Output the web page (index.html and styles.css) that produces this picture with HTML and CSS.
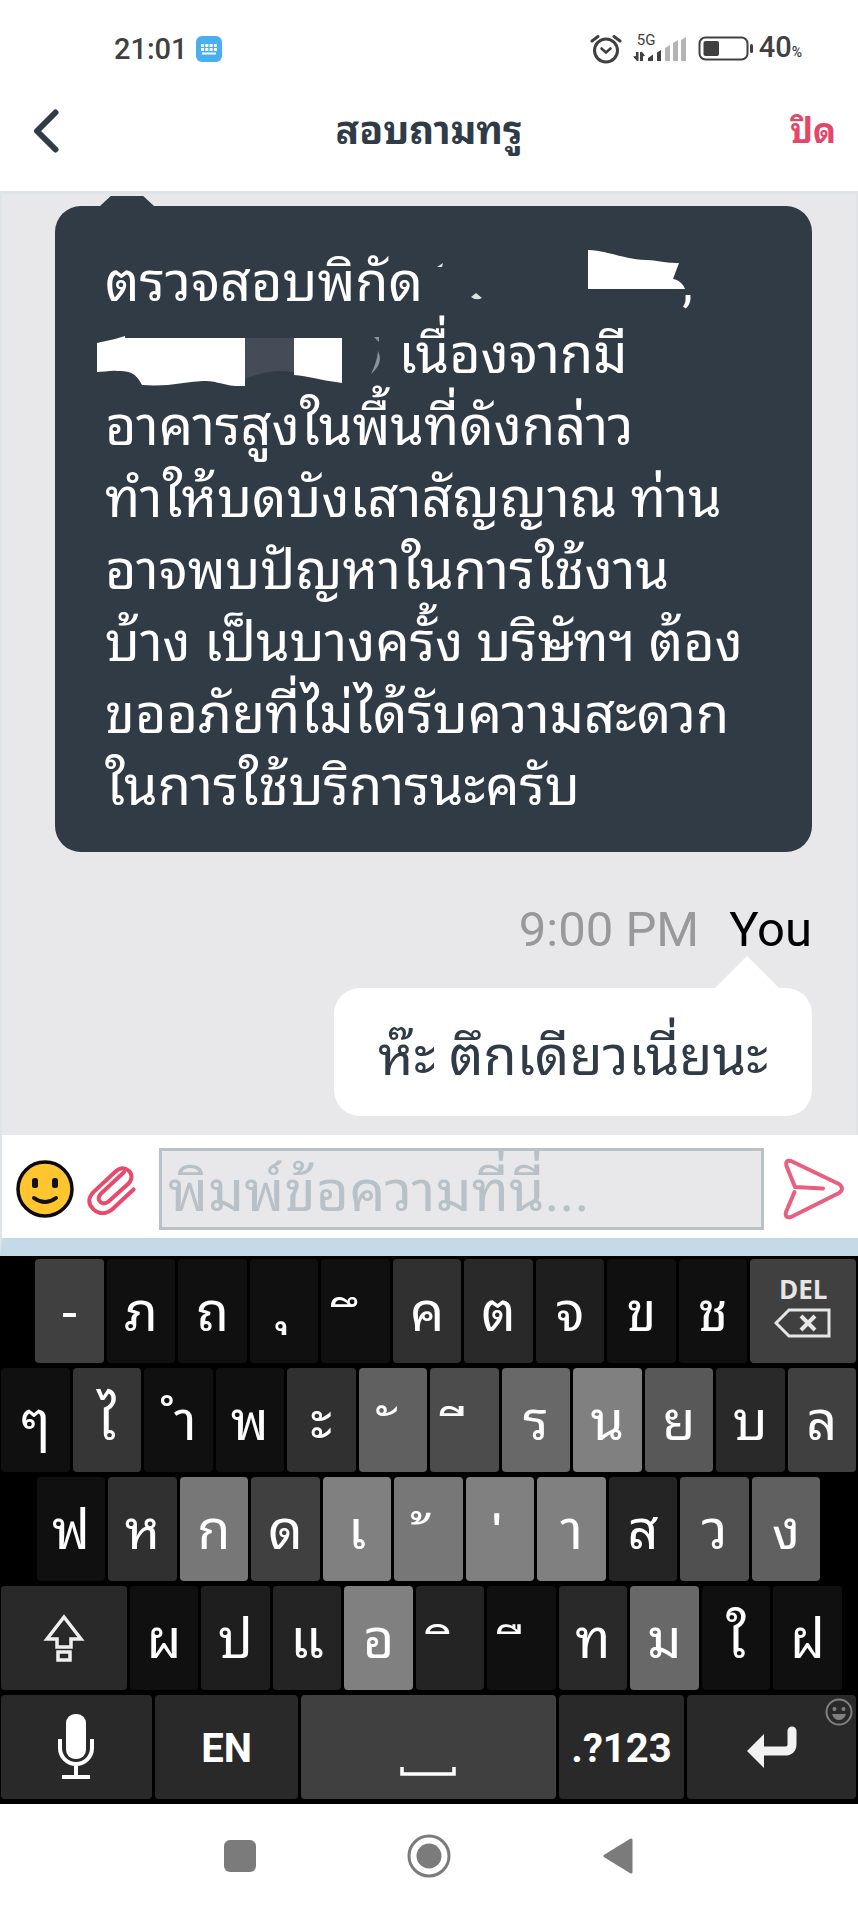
FILE: index.html
```html
<!DOCTYPE html>
<html lang="th">
<head>
<meta charset="utf-8">
<meta name="viewport" content="width=device-width, initial-scale=1">
<title>สอบถามทรู</title>
<link rel="stylesheet" href="styles.css">
</head>
<body>
<div class="status-bar">
  <div class="status-group">
    <span class="clock">21:01</span>
    <svg class="status-app" width="26" height="26" viewBox="0 0 26 26"><rect width="26" height="26" rx="6" fill="#4aaef2"/><path d="M5 9.5h16M5 13.5h16" stroke="#fff" stroke-width="3" stroke-dasharray="3 1.3"/><path d="M6 17.5h14" stroke="#fff" stroke-width="2"/></svg>
  </div>
  <div class="status-group status-right">
    <svg width="32" height="30" viewBox="0 0 32 30" fill="none" stroke="#404040" stroke-linecap="round"><circle cx="16" cy="16.500" r="11.500" stroke-width="3"/><path d="M2 7 8 2.500M30 7 24 2.500" stroke-width="3"/><path d="M11.500 14.500 16 18.500l4.500-4" stroke-width="2.600"/></svg>
    <span class="signal">
      <span class="network">5G</span>
      <svg width="54" height="26" viewBox="0 0 54 26"><path fill="#404040" d="M3 16h2.500v9H4l-4-4.500 3-.5zM7 25v-9h2l3 3.500-2 1v4.500zM15 25v-3l5-3.500v6.500zM24 25v-8.500l4-2.500v11z"/><path fill="#b4b4b4" d="M32 25V12l5-3v16zM40 25V7l5-3v21zM48 25V4l5-3v24z"/></svg>
    </span>
    <svg width="56" height="26" viewBox="0 0 56 26"><rect x="1.500" y="1.500" width="48" height="22" rx="6" fill="none" stroke="#404040" stroke-width="2"/><rect x="5.500" y="5" width="15.500" height="15" rx="2" fill="#404040"/><rect x="52" y="8" width="3" height="9" rx="1.500" fill="#404040"/></svg>
    <span class="battery">40<small>%</small></span>
  </div>
</div>

<header class="header">
  <button class="back" type="button" aria-label="Back"><svg width="26" height="44" viewBox="0 0 26 44"><path d="M22.500 3.500 4 22l18.500 18.500" fill="none" stroke="#2f3b46" stroke-width="6" stroke-linecap="round" stroke-linejoin="round"/></svg></button>
  <h1 class="title">สอบถามทรู</h1>
  <button class="close" type="button">ปิด</button>
</header>

<main class="chat">
  <div class="bubble bubble-agent">
    <p>ตรวจสอบพิกัด<svg class="blot blot-one" width="266" height="52" viewBox="0 8 266 52"><defs><filter id="soft"><feGaussianBlur stdDeviation="0.700"/></filter></defs><path d="M168 8c22 1 34 9 58 10 12 0 15 3 33 3l-6 16c7 1 11 7 12 10h-97z" fill="#fff"/><path d="M51 55q5 4 11 1l-6-5zM17 25l6-4-1 4z" fill="#dce2e6" filter="url(#soft)"/></svg>,</p>
    <p><svg class="blot blot-two" width="288" height="60" viewBox="0 0 288 60"><path d="M0 14 18 10l10-3v2h120v48c-20 1-28-6-42-5-20 1-34 6-61 4-6-12-12-14-25-14-5-1-14 1-20 1z" fill="#fff"/><path d="M148 9h49v34c-15-2-26-2-49 7z" fill="#454c57"/><path d="M197 9h48v45c-22-3-34-7-48-8z" fill="#fff"/><path d="M277 8h5v5zM281 22q6 12-7 23 6-12 7-23z" fill="#8b949b"/></svg> เนื่องจากมี</p>
    <p>อาคารสูงในพื้นที่ดังกล่าว</p>
    <p>ทำให้บดบังเสาสัญญาณ ท่าน</p>
    <p>อาจพบปัญหาในการใช้งาน</p>
    <p>บ้าง เป็นบางครั้ง บริษัทฯ ต้อง</p>
    <p>ขออภัยที่ไม่ได้รับความสะดวก</p>
    <p>ในการใช้บริการนะครับ</p>
  </div>
  <div class="meta"><time>9:00 PM</time><span class="sender">You</span></div>
  <div class="bubble bubble-user"><p>ห๊ะ ตึกเดียวเนี่ยนะ</p></div>
</main>

<form class="composer">
  <button class="icon-button" type="button" aria-label="Emoji"><svg width="58" height="58" viewBox="0 0 58 58"><circle cx="29" cy="29" r="27" fill="#ffc52f" stroke="#0b0b0b" stroke-width="3.500"/><rect x="16" y="18" width="6" height="10" rx="2.500" fill="#111"/><rect x="36" y="18" width="6" height="10" rx="2.500" fill="#111"/><path d="M18 38q11 8 22 0" fill="none" stroke="#111" stroke-width="4" stroke-linecap="round"/></svg></button>
  <button class="icon-button" type="button" aria-label="Attach file"><svg width="52" height="52" viewBox="0 0 52 52"><path d="M49.500 25.500 28 45.500c-7 6.500-15 6-20.500.5s-5.500-12 .5-18L30.500 7c5-4.500 10-4.500 14-1s4 9-.5 13.500L23.500 38c-3 2.500-6 2.500-8.500.500s-2.500-5.500.5-8.500l24-22.500" transform="translate(1 2) scale(.96)" fill="none" stroke="#e84a6c" stroke-width="4.200" stroke-linecap="round" stroke-linejoin="round"/></svg></button>
  <input class="message-input" type="text" aria-label="พิมพ์ข้อความ" placeholder="พิมพ์ข้อความที่นี่...">
  <button class="icon-button send" type="button" aria-label="Send"><svg width="62" height="62" viewBox="0 0 62 62"><path d="M40 30.500 12 29 3.500 8Q2 1.500 8 3L56 26q6 4.500 0 9L8 59Q1.500 60.500 3 54L11.500 34" fill="none" stroke="#e8607f" stroke-width="4" stroke-linecap="round" stroke-linejoin="round"/></svg></button>
</form>

<section class="keyboard" aria-label="Keyboard">
  <div class="key-row row-one">
    <span></span><button class="key g7">-</button><button class="key">ภ</button><button class="key">ถ</button><button class="key mark-low">&nbsp;ุ</button><button class="key mark">&nbsp;ึ</button><button class="key g5">ค</button><button class="key g4">ต</button><button class="key g2">จ</button><button class="key">ข</button><button class="key">ช</button>
    <button class="key g7 delete"><span>DEL</span><svg width="58" height="30" viewBox="0 0 58 30" fill="none" stroke="#e6e6e6" stroke-width="3"><path d="M2 15 15 2h40v26H15z"/><path d="m27 8 14 14M41 8 27 22" stroke-width="4"/></svg></button>
  </div>
  <div class="key-row row-two">
    <button class="key">ๆ</button><button class="key g6">ไ</button><button class="key">&nbsp;ำ</button><button class="key">พ</button><button class="key g5">ะ</button><button class="key mark g11">&nbsp;ั</button><button class="key mark g8">&nbsp;ี</button><button class="key g12">ร</button><button class="key g14">น</button><button class="key g10">ย</button><button class="key g4">บ</button><button class="key g7">ล</button>
  </div>
  <div class="key-row row-three">
    <span></span><button class="key">ฟ</button><button class="key g5">ห</button><button class="key g13">ก</button><button class="key g7">ด</button><button class="key g14">เ</button><button class="key mark g13">&nbsp;้</button><button class="key mark g14">&nbsp;่</button><button class="key g14">า</button><button class="key g3">ส</button><button class="key g9">ว</button><button class="key g11">ง</button>
  </div>
  <div class="key-row row-four">
    <button class="key g4 key-icon" aria-label="Shift"><svg width="42" height="50" viewBox="0 0 42 50" fill="none" stroke="#efefef" stroke-width="3.500"><path d="M21 4 4 26h10v8h14v-8h10zM15 39h12v8H15z"/></svg></button><button class="key">ผ</button><button class="key g2">ป</button><button class="key g3">แ</button><button class="key g14">อ</button><button class="key mark g3">&nbsp;ิ</button><button class="key mark">&nbsp;ื</button><button class="key g4">ท</button><button class="key g12">ม</button><button class="key">ใ</button><button class="key">ฝ</button>
  </div>
  <div class="key-row row-five">
    <button class="key g4 key-icon" aria-label="Voice input"><svg width="38" height="66" viewBox="0 0 38 66"><rect x="9" y="0" width="20" height="45" rx="9" fill="#fff"/><path d="M3 25v9a16 16 0 0 0 32 0v-9M19 50v13M5 63h28" fill="none" stroke="#fff" stroke-width="4"/></svg></button>
    <button class="key g4 key-label">EN</button>
    <button class="key g7 space" aria-label="Space"><svg width="56" height="10" viewBox="0 0 56 10"><path d="M2 1v7h52V1" fill="none" stroke="#fff" stroke-width="3.500"/></svg></button>
    <button class="key g4 key-label">.?123</button>
    <button class="key g4 key-icon enter" aria-label="Enter"><svg width="50" height="42" viewBox="0 0 50 42"><path d="M45 5v13q0 7-7 7H16" fill="none" stroke="#f2f2f2" stroke-width="9" stroke-linecap="round"/><path d="M0 25 17 8v34z" fill="#f2f2f2"/></svg><svg class="enter-emoji" width="28" height="28" viewBox="0 0 28 28"><circle cx="14" cy="14" r="12.500" fill="none" stroke="#808080" stroke-width="2"/><circle cx="9.500" cy="11" r="2" fill="#808080"/><circle cx="18.500" cy="11" r="2" fill="#808080"/><path d="M7 16h14q-2 6-7 6t-7-6z" fill="#808080"/></svg></button>
  </div>
</section>

<nav class="system-nav">
  <button type="button" aria-label="Recent apps"><svg width="32" height="32"><rect width="32" height="32" rx="6" fill="#7b7b7b"/></svg></button>
  <button type="button" aria-label="Home"><svg width="44" height="44" viewBox="0 0 44 44"><circle cx="22" cy="22" r="20" fill="none" stroke="#7b7b7b" stroke-width="3"/><circle cx="22" cy="22" r="12.500" fill="#7b7b7b"/></svg></button>
  <button type="button" aria-label="Back"><svg width="30" height="36" viewBox="0 0 30 36"><path d="M28 2v32L2 18z" fill="#7b7b7b" stroke="#7b7b7b" stroke-width="3" stroke-linejoin="round"/></svg></button>
</nav>
</body>
</html>
```
FILE: styles.css
```css
* { box-sizing: border-box; }

body {
  margin: 0;
  background: #fff;
  font-family: Roboto, "Noto Sans Thai Looped", "Noto Sans Thai", "Noto Sans", sans-serif;
  color: #2f3b46;
}

button {
  margin: 0;
  padding: 0;
  border: 0;
  background: none;
  color: inherit;
  font: inherit;
}

svg { display: block; flex: none; }
p { margin: 0; }

.status-bar {
  display: flex;
  align-items: center;
  justify-content: space-between;
  height: 96px;
  padding: 2px 56px 0 114px;
  color: #404040;
}
.status-group { display: flex; align-items: center; gap: 8px; }
.status-right { gap: 11px; }
.clock, .battery { font-size: 29px; line-height: 32px; font-weight: 500; }
.battery small { font-size: 14px; }
.status-right .battery { margin-left: -6px; }
.signal { position: relative; }
.network {
  position: absolute;
  top: -4px;
  left: 4px;
  font-size: 15px;
  line-height: 16px;
}

.header {
  display: grid;
  grid-template-columns: 1fr auto 1fr;
  align-items: center;
  height: 95px;
  padding: 0 22px 26px;
}
.back { justify-self: start; margin-left: 11px; }
.title { margin: 0; font-size: 39px; line-height: 48px; font-weight: 700; }
.close {
  justify-self: end;
  font-size: 34px;
  line-height: 48px;
  font-weight: 700;
  color: #e4476a;
}

.chat {
  padding: 12px 44px 19px 53px;
  border: 2px solid #dfe4e9;
  border-top-width: 3px;
  border-bottom: 0;
  background: #e8e8ea;
}
.bubble {
  position: relative;
  border-radius: 26px;
  font-size: 54px;
  line-height: 72px;
  white-space: nowrap;
}
.bubble::before { content: ""; position: absolute; }
.bubble-agent {
  padding: 41px 50px 29px;
  background: #303b46;
  color: #fff;
}
.bubble-agent::before {
  left: 45px;
  bottom: 100%;
  width: 54px;
  height: 10px;
  background: inherit;
  clip-path: polygon(20% 0, 80% 0, 100% 100%, 0 100%);
}
.bubble-user {
  width: fit-content;
  margin-left: auto;
  padding: 33px 44px 23px;
  background: #fff;
}
.bubble-user::before {
  right: 33px;
  bottom: 100%;
  width: 64px;
  height: 32px;
  background: inherit;
  clip-path: polygon(50% 0, 100% 100%, 0 100%);
}
.blot { display: inline-block; }
.blot-one { margin: 0 -4px 0 -3px; vertical-align: -1px; }
.blot-two { margin-left: -8px; vertical-align: -16px; }

.meta {
  display: flex;
  justify-content: flex-end;
  gap: 30px;
  margin: 48px 0 28px;
  font-size: 49px;
  line-height: 60px;
}
.meta time { color: #999; }
.sender { color: #000; }

.composer {
  display: flex;
  align-items: center;
  gap: 11px;
  height: 121px;
  padding: 5px 13px 0 14px;
  border-bottom: 18px solid #c4dae8;
  border-left: 2px solid #dfe4e9;
}
.message-input {
  flex: 1;
  min-width: 0;
  height: 82px;
  margin: 0 8px 0 11px;
  padding: 6px 6px 0;
  border: 3px solid #b8c1c7;
  border-radius: 0;
  background: #e8e8ea;
  color: #2f3b46;
  font: inherit;
  font-size: 57px;
  line-height: 92px;
}
.message-input::placeholder { color: #b8c1c7; opacity: 1; line-height: 92px; }

.keyboard {
  display: grid;
  gap: 5px;
  padding: 3px 0 5px;
  background: #000;
}
.key-row { display: grid; }
.row-one { grid-template-columns: 48fr repeat(10, 100fr) 152fr; }
.row-two { grid-template-columns: repeat(12, 100fr); }
.row-three { grid-template-columns: 50fr repeat(11, 100fr) 50fr; }
.row-four { grid-template-columns: 180fr repeat(10, 100fr) 20fr; }
.row-five { grid-template-columns: 215fr 205fr 360fr 180fr 240fr; }

.key {
  display: flex;
  align-items: center;
  justify-content: center;
  min-width: 0;
  height: 104px;
  margin: 0 2px 0 1px;
  padding-top: 4px;
  border-radius: 4px;
  background: #101010;
  color: #fff;
  font-size: 54px;
  line-height: 60px;
  white-space: pre;
}
.mark { padding: 26px 6px 0 0; }
.mark-low { padding-bottom: 26px; }
.key-label { font-size: 40px; font-weight: 700; }
.key-icon { padding-top: 0; }
.delete { flex-direction: column; gap: 6px; padding: 0 0 8px; color: #e6e6e6; }
.delete span {
  font-family: "Open Sans", sans-serif;
  font-size: 26px;
  line-height: 26px;
  font-weight: 700;
}
.space { align-items: flex-end; padding-bottom: 23px; }
.enter { position: relative; }
.enter-emoji { position: absolute; top: 3px; right: 3px; }

.g2 { background: #1e1e1e; }
.g3 { background: #242424; }
.g4 { background: #292929; }
.g5 { background: #303030; }
.g6 { background: #363636; }
.g7 { background: #404040; }
.g8 { background: #4c4c4c; }
.g9 { background: #505050; }
.g10 { background: #585858; }
.g11 { background: #606060; }
.g12 { background: #686868; }
.g13 { background: #777; }
.g14 { background: #808080; }

.system-nav {
  display: grid;
  grid-template-columns: repeat(3, 22%);
  justify-content: center;
  justify-items: center;
  align-items: center;
  height: 103px;
}
```
